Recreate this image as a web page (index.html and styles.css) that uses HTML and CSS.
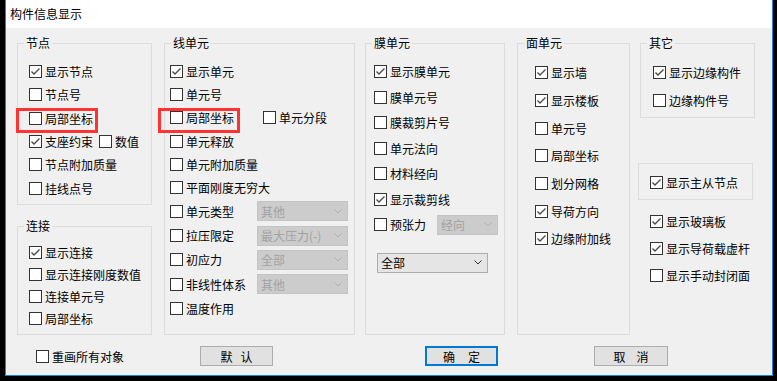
FILE: index.html
```html
<!DOCTYPE html>
<html lang="zh-CN">
<head>
    <meta charset="UTF-8">
    <title>构件信息显示</title>
    <link rel="stylesheet" href="styles.css">
</head>
<body>
<div class="desktop">
    <div class="dialog">
        <div class="titlebar">构件信息显示</div>
        <div class="client">
            <div class="columns">
                <!-- 节点 / 连接 -->
                <div class="col col-1">
                    <div class="group g-node">
                        <div class="legend">节点</div>
                        <div class="rows">
                            <div class="row"><span class="cb on"><svg viewBox="0 0 11 11"><polyline points="1.5,5.5 4,8 9.5,2.5"/></svg></span>显示节点</div>
                            <div class="row"><span class="cb"></span>节点号</div>
                            <div class="row"><span class="cb"></span>局部坐标</div>
                            <div class="row"><span class="cb on"><svg viewBox="0 0 11 11"><polyline points="1.5,5.5 4,8 9.5,2.5"/></svg></span><span class="lbl-support">支座约束</span><span class="cb"></span>数值</div>
                            <div class="row"><span class="cb"></span>节点附加质量</div>
                            <div class="row"><span class="cb"></span>挂线点号</div>
                        </div>
                    </div>
                    <div class="group g-link">
                        <div class="legend">连接</div>
                        <div class="rows">
                            <div class="row"><span class="cb on"><svg viewBox="0 0 11 11"><polyline points="1.5,5.5 4,8 9.5,2.5"/></svg></span>显示连接</div>
                            <div class="row"><span class="cb"></span>显示连接刚度数值</div>
                            <div class="row"><span class="cb"></span>连接单元号</div>
                            <div class="row"><span class="cb"></span>局部坐标</div>
                        </div>
                    </div>
                </div>

                <!-- 线单元 -->
                <div class="col col-2">
                    <div class="group g-line">
                        <div class="legend">线单元</div>
                        <div class="rows">
                            <div class="row"><span class="cb on"><svg viewBox="0 0 11 11"><polyline points="1.5,5.5 4,8 9.5,2.5"/></svg></span>显示单元</div>
                            <div class="row"><span class="cb"></span>单元号</div>
                            <div class="row"><span class="cb"></span><span class="lbl-seg">局部坐标</span><span class="cb"></span>单元分段</div>
                            <div class="row"><span class="cb"></span>单元释放</div>
                            <div class="row"><span class="cb"></span>单元附加质量</div>
                            <div class="row"><span class="cb"></span>平面刚度无穷大</div>
                            <div class="row tall"><span class="cb"></span><span class="lbl">单元类型</span>
                                <div class="select off w-line"><span>其他</span><svg viewBox="0 0 8 5"><polyline points="0.5,0.5 4,4 7.5,0.5"/></svg></div></div>
                            <div class="row tall"><span class="cb"></span><span class="lbl">拉压限定</span>
                                <div class="select off w-line"><span>最大压力(-)</span><svg viewBox="0 0 8 5"><polyline points="0.5,0.5 4,4 7.5,0.5"/></svg></div></div>
                            <div class="row tall"><span class="cb"></span><span class="lbl">初应力</span>
                                <div class="select off w-line"><span>全部</span><svg viewBox="0 0 8 5"><polyline points="0.5,0.5 4,4 7.5,0.5"/></svg></div></div>
                            <div class="row tall"><span class="cb"></span><span class="lbl">非线性体系</span>
                                <div class="select off w-line"><span>其他</span><svg viewBox="0 0 8 5"><polyline points="0.5,0.5 4,4 7.5,0.5"/></svg></div></div>
                            <div class="row tall"><span class="cb"></span>温度作用</div>
                        </div>
                    </div>
                </div>

                <!-- 膜单元 -->
                <div class="col col-3">
                    <div class="group g-membrane">
                        <div class="legend">膜单元</div>
                        <div class="rows">
                            <div class="row"><span class="cb on"><svg viewBox="0 0 11 11"><polyline points="1.5,5.5 4,8 9.5,2.5"/></svg></span>显示膜单元</div>
                            <div class="row"><span class="cb"></span>膜单元号</div>
                            <div class="row"><span class="cb"></span>膜裁剪片号</div>
                            <div class="row"><span class="cb"></span>单元法向</div>
                            <div class="row"><span class="cb"></span>材料经向</div>
                            <div class="row"><span class="cb on"><svg viewBox="0 0 11 11"><polyline points="1.5,5.5 4,8 9.5,2.5"/></svg></span>显示裁剪线</div>
                            <div class="row"><span class="cb"></span><span class="lbl-pre">预张力</span>
                                <div class="select off w-pre"><span>经向</span><svg viewBox="0 0 8 5"><polyline points="0.5,0.5 4,4 7.5,0.5"/></svg></div></div>
                        </div>
                        <div class="select w-all"><span>全部</span><svg viewBox="0 0 8 5"><polyline points="0.5,0.5 4,4 7.5,0.5"/></svg></div>
                    </div>
                </div>

                <!-- 面单元 -->
                <div class="col col-4">
                    <div class="group g-face">
                        <div class="legend">面单元</div>
                        <div class="rows">
                            <div class="row"><span class="cb on"><svg viewBox="0 0 11 11"><polyline points="1.5,5.5 4,8 9.5,2.5"/></svg></span>显示墙</div>
                            <div class="row"><span class="cb on"><svg viewBox="0 0 11 11"><polyline points="1.5,5.5 4,8 9.5,2.5"/></svg></span>显示楼板</div>
                            <div class="row"><span class="cb"></span>单元号</div>
                            <div class="row"><span class="cb"></span>局部坐标</div>
                            <div class="row"><span class="cb"></span>划分网格</div>
                            <div class="row"><span class="cb on"><svg viewBox="0 0 11 11"><polyline points="1.5,5.5 4,8 9.5,2.5"/></svg></span>导荷方向</div>
                            <div class="row"><span class="cb on"><svg viewBox="0 0 11 11"><polyline points="1.5,5.5 4,8 9.5,2.5"/></svg></span>边缘附加线</div>
                        </div>
                    </div>
                </div>

                <!-- 其它 -->
                <div class="col col-5">
                    <div class="group g-other">
                        <div class="legend">其它</div>
                        <div class="rows">
                            <div class="row"><span class="cb on"><svg viewBox="0 0 11 11"><polyline points="1.5,5.5 4,8 9.5,2.5"/></svg></span>显示边缘构件</div>
                            <div class="row"><span class="cb"></span>边缘构件号</div>
                        </div>
                    </div>
                    <div class="group g-master">
                        <div class="row"><span class="cb on"><svg viewBox="0 0 11 11"><polyline points="1.5,5.5 4,8 9.5,2.5"/></svg></span>显示主从节点</div>
                    </div>
                    <div class="rows extra">
                        <div class="row"><span class="cb on"><svg viewBox="0 0 11 11"><polyline points="1.5,5.5 4,8 9.5,2.5"/></svg></span>显示玻璃板</div>
                        <div class="row"><span class="cb on"><svg viewBox="0 0 11 11"><polyline points="1.5,5.5 4,8 9.5,2.5"/></svg></span>显示导荷载虚杆</div>
                        <div class="row"><span class="cb"></span>显示手动封闭面</div>
                    </div>
                </div>
            </div>

            <div class="bottom">
                <div class="row redraw"><span class="cb"></span>重画所有对象</div>
                <div class="btn b-reset"><span>默</span><span>认</span></div>
                <div class="btn b-ok"><span>确</span><span>定</span></div>
                <div class="btn b-cancel"><span>取</span><span>消</span></div>
            </div>

            <!-- red annotation boxes -->
            <div class="mark mark-1"></div>
            <div class="mark mark-2"></div>
        </div>
    </div>
</div>
</body>
</html>
```

FILE: styles.css
```css
body {
    margin: 0;
    background: #000;
    font-family: "Noto Sans CJK SC", "Microsoft YaHei", sans-serif;
    font-size: 12px;
    color: #000;
}

.desktop {
    width: 777px;
    height: 381px;
    overflow: hidden;
}

.dialog {
    margin-left: 5px;
    width: 768px;
    height: 376px;
    box-sizing: border-box;
    border: 1px solid #1883d7;
    border-top: none;
    background: #f0f0f0;
}

.titlebar {
    height: 28px;
    line-height: 28px;
    padding-left: 4px;
    background: #fff;
}

.client {
    position: relative;
    height: 347px;
}

.columns {
    display: flex;
    align-items: flex-start;
    padding: 15px 0 0 11px;
}

.col-1 { width: 135px; }
.col-2 { width: 191px; margin-left: 12px; }
.col-3 { width: 140px; margin-left: 10px; }
.col-4 { width: 113px; margin-left: 12px; }
.col-5 { width: 117px; margin-left: 8px; }

/* group boxes */
.group {
    box-sizing: border-box;
    border: 1px solid #dcdcdc;
}

.legend {
    width: max-content;
    height: 14px;
    line-height: 14px;
    margin: -8px 0 0 6px;
    padding: 0 2px;
    background: #f0f0f0;
}

.g-node { height: 162px; }
.g-node .rows { margin-top: 10px; padding-left: 11px; }
.g-node .row { height: 23.3px; }

.g-link { height: 109px; margin-top: 21px; }
.g-link .rows { margin-top: 8px; padding-left: 11px; }
.g-link .row { height: 22.2px; }

.g-line { height: 292px; }
.g-line .rows { margin-top: 10px; padding-left: 5px; }
.g-line .row { height: 23.2px; }
.g-line .row.tall { height: 24.3px; }

.g-membrane { height: 292px; }
.g-membrane .rows { margin-top: 9px; padding-left: 8px; }
.g-membrane .row { height: 25.5px; }

.g-face { height: 292px; }
.g-face .rows { margin-top: 9px; padding-left: 17px; }
.g-face .row { height: 27.7px; }

.g-other { height: 75px; width: 115px; margin-left: 2px; }
.g-other .rows { margin-top: 8px; padding-left: 12px; }
.g-other .row { height: 28px; }

.g-master {
    width: 115px;
    height: 37px;
    margin-top: 45px;
    padding: 7px 0 0 11px;
}
.g-master .row { height: 23px; }

.extra { margin-top: 7.5px; padding-left: 12px; }
.extra .row { height: 27px; }

/* checkbox rows */
.row {
    display: flex;
    align-items: center;
    white-space: nowrap;
}

.cb {
    display: flex;
    flex: none;
    width: 13px;
    height: 13px;
    box-sizing: border-box;
    border: 1px solid #333;
    background: #fff;
    margin-right: 3px;
}

.cb svg {
    width: 11px;
    height: 11px;
    fill: none;
    stroke: #4a4a4a;
    stroke-width: 1.4;
}

.lbl-support { width: 54px; }
.lbl-seg { width: 77px; }
.lbl { width: 71px; }
.lbl-pre { width: 47px; }

/* combo boxes */
.select {
    display: flex;
    align-items: center;
    justify-content: space-between;
    box-sizing: border-box;
    height: 20px;
    padding: 0 5px 0 3px;
    border: 1px solid #adadad;
    background: #e5e5e5;
    color: #000;
}

.select svg {
    width: 8px;
    height: 5px;
    fill: none;
    stroke: #333;
    stroke-width: 1;
}

.select.off {
    background: #cccccc;
    border-color: #c4c4c4;
    color: #a2a2a2;
}

.select.off svg { stroke: #b0b0b0; }

.w-line { width: 91px; }
.w-pre { width: 61px; }
.w-all { width: 111px; margin: 15px 0 0 11px; }

/* bottom buttons */
.bottom {
    display: flex;
    align-items: center;
    margin-top: 11px;
    padding-left: 30px;
}

.redraw { width: 164px; }

.btn {
    display: flex;
    align-items: center;
    justify-content: center;
    box-sizing: border-box;
    width: 73px;
    height: 20px;
    border: 1px solid #adadad;
    background: #e1e1e1;
}

.btn span + span { margin-left: 8px; }

.b-ok {
    margin-left: 152px;
    border: 2px solid #0078d7;
}
.b-ok span + span { margin-left: 13px; }

.b-cancel { margin-left: 96px; width: 74px; }
.b-cancel span + span { margin-left: 11px; }

/* annotation boxes drawn over the dialog */
.mark {
    position: absolute;
    top: 80px;
    width: 82px;
    height: 25px;
    box-sizing: border-box;
    border: 3px solid #f33;
}

.mark-1 { left: 10px; }
.mark-2 { left: 152px; }
```
